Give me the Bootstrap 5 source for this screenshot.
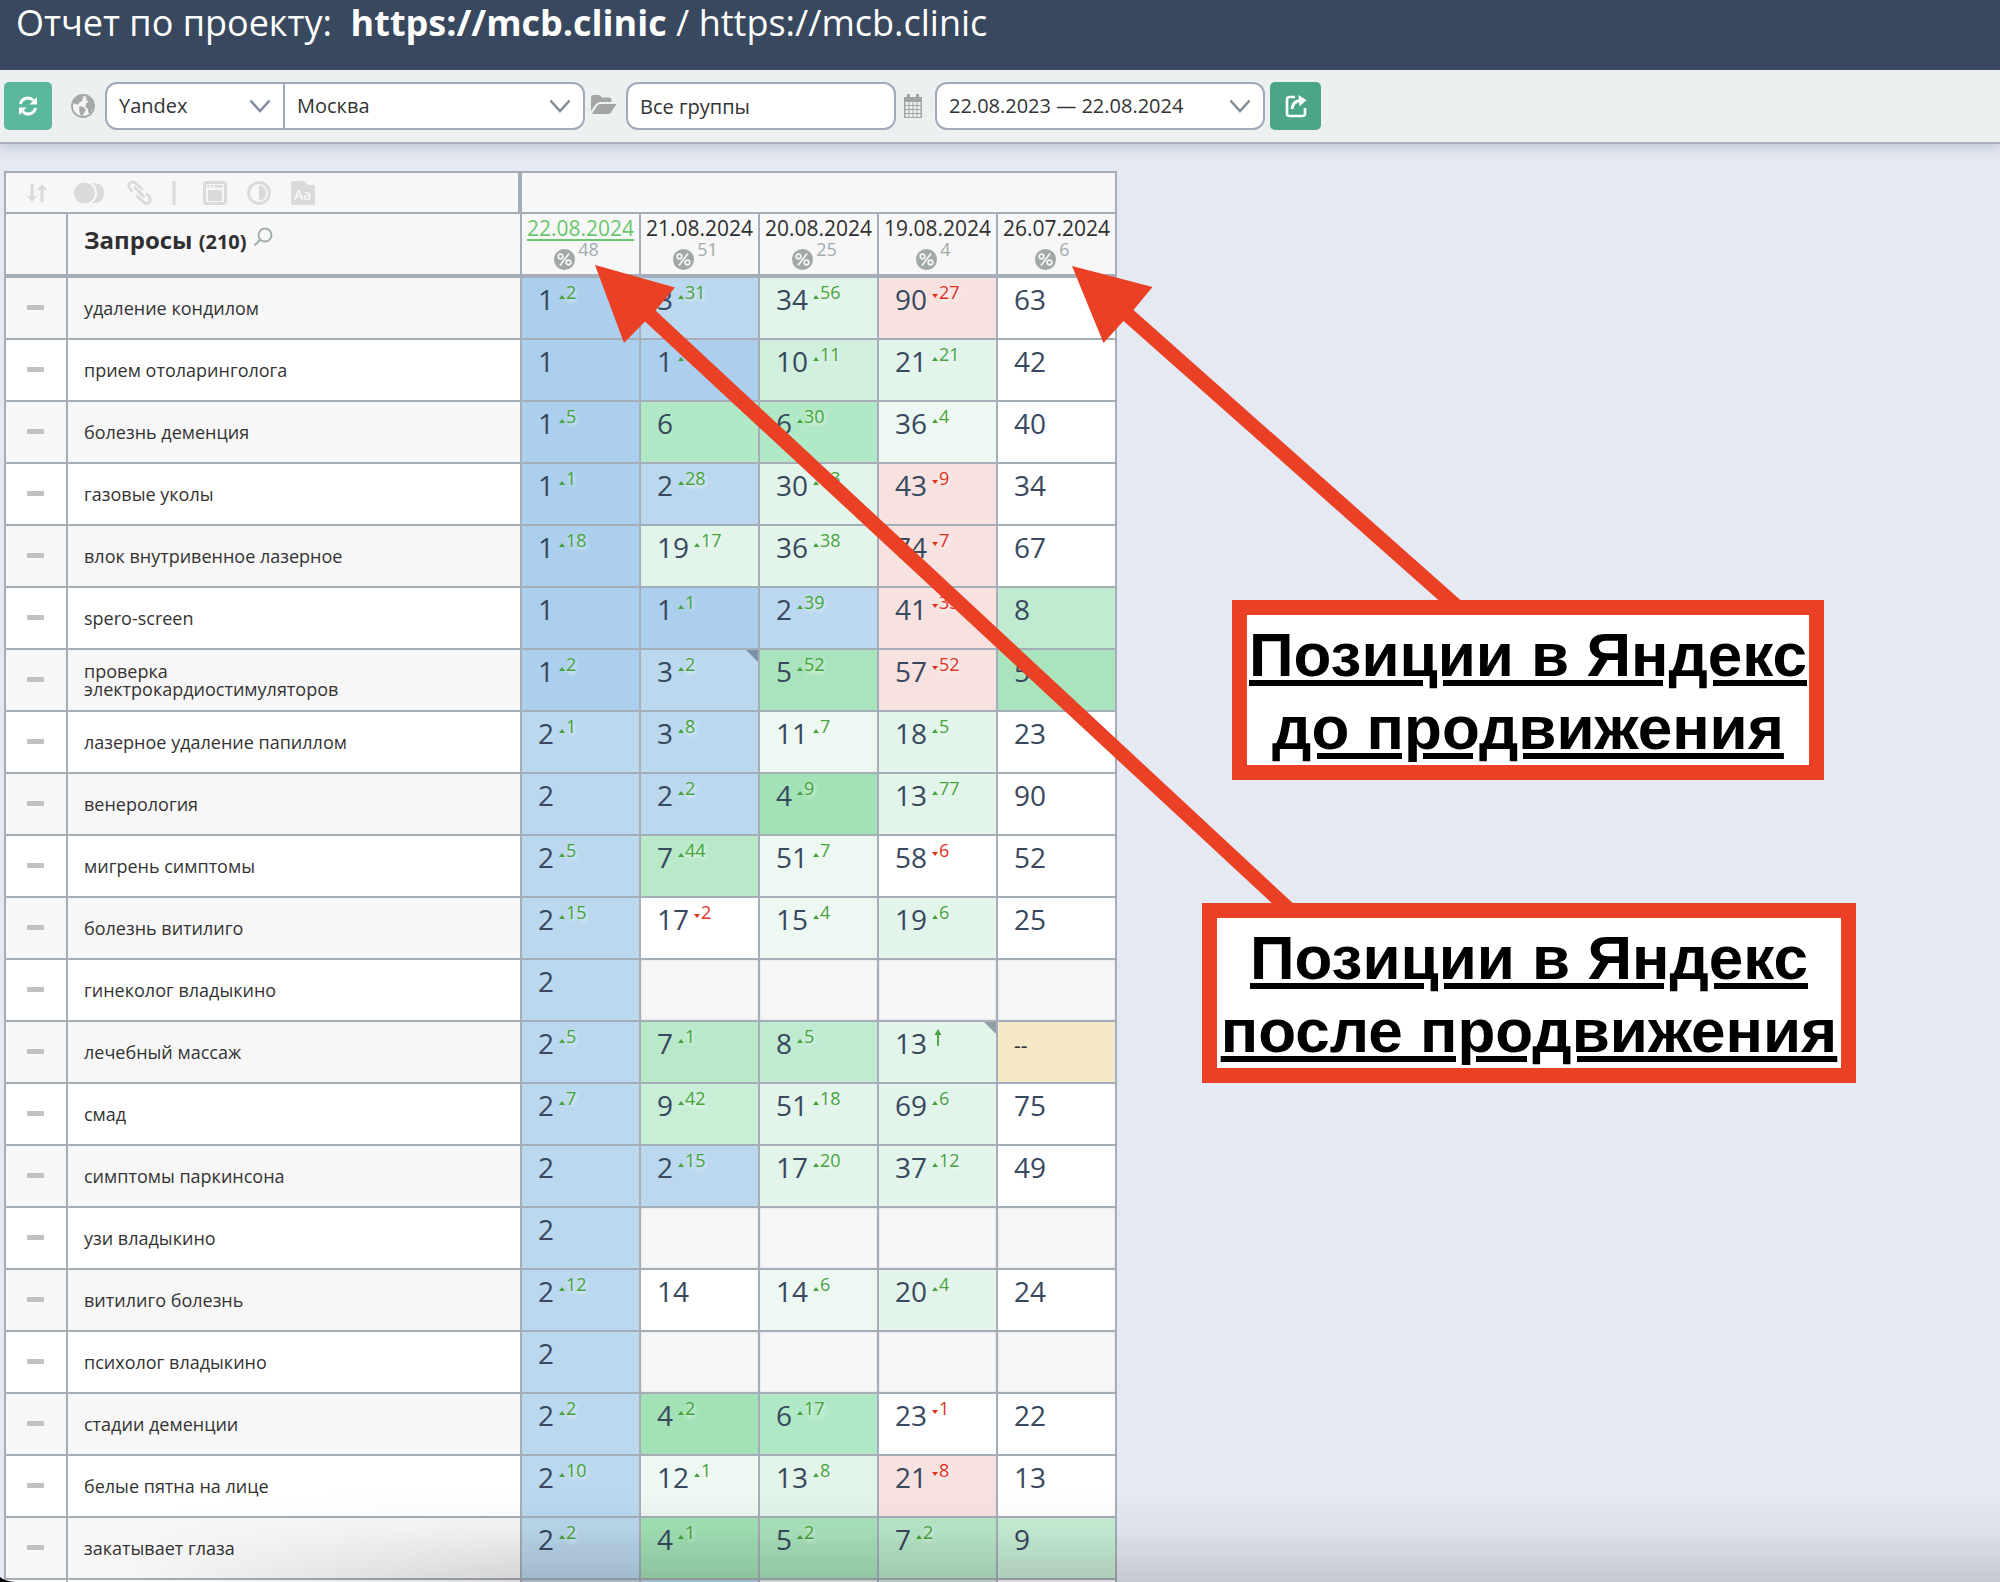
<!DOCTYPE html>
<html lang="ru">
<head>
<meta charset="utf-8">
<meta name="viewport" content="width=device-width, initial-scale=1">
<title>Отчет по проекту</title>
<link rel="stylesheet" href="https://cdn.jsdelivr.net/npm/bootstrap@5.3.0/dist/css/bootstrap.min.css">
<style>
body{font-family:"Open Sans","Noto Sans",sans-serif;background:#e5eaf2;color:#333}
.topline{background:#38485e;color:#fff;height:70px;font-size:36px;line-height:46px;padding-left:16px}
.toolbar{background:#ecf0f1;height:74px;border-bottom:2px solid #a9b1c0;box-shadow:0 3px 14px rgba(90,100,130,.3);padding-left:4px}
.toolbar .btn{height:48px;width:48px;border-radius:5px;background:#5bb79b;border:0}
.toolbar .btn.export{width:51px;margin-left:5px;background:#4ca585}
.toolbar .form-select,.toolbar .form-control{height:48px;font-size:20px;line-height:28px;color:#333;border:2px solid #a0a9b9;border-radius:12px;padding:8px 12px;background-color:#fff}
.toolbar .form-select{--bs-form-select-bg-img:url("data:image/svg+xml,%3Csvg xmlns='http://www.w3.org/2000/svg' viewBox='0 0 22 14'%3E%3Cpath d='M1.5 1.5 11 12 20.5 1.5' fill='none' stroke='%23838e9d' stroke-width='2.6'/%3E%3C/svg%3E");background-size:22px 14px;background-position:right 12px center;padding-right:36px}
.toolbar .engine{width:180px;border-radius:12px 0 0 12px}
.toolbar .region{width:302px;margin-left:-2px;border-radius:0 12px 12px 0}
.toolbar .groups{width:270px}
.toolbar .period{width:330px}
.grid-pos{width:1113px;table-layout:fixed;border-collapse:separate;border-spacing:0;border-top:2px solid #a5aeb8;border-left:2px solid #a5aeb8;margin:27px 0 0 4px}
.grid-pos th,.grid-pos td{border-right:2px solid #a5aeb8;border-bottom:2px solid #a5aeb8;padding:0;font-weight:400}
.grid-pos thead th,.grid-pos thead td{background:#f7f7f7}
.tools-row>*{height:41px}
.grid-pos .tools{border-right-width:4px}
.tools .btn{padding:0;border:0;line-height:1;color:#d9dadb}
.head-row>*{height:64px;vertical-align:top}
.grid-pos .head-row>*{border-bottom-width:4px}
.head-row h1{font-size:24px;line-height:28px;font-weight:700;margin:0;padding:12px 0 0 16px;color:#2f2f2f}
.head-row h1 span{font-size:20px}
.head-row h1 svg{vertical-align:2px}
.date{display:block;text-align:center;font-size:21px;line-height:24px;padding-top:2px;color:#2f2f2f;text-decoration:none}
.date.now{color:#6cc76c;text-decoration:underline;text-decoration-thickness:2px;text-underline-offset:3px}
.pct{padding-right:8px;font-size:18px;line-height:18px;color:#a3abac;gap:3px}
.pct svg{margin-top:9px}
tbody tr{height:62px}
tbody tr>*{background:#fff}
tbody tr:nth-child(odd)>*{background:#f7f7f7}
.grid-pos .tick{text-align:center;padding:0 2px 4px 0}
.tick i{display:inline-block;width:17px;height:5px;border-radius:1px;background:#c0c1c1;vertical-align:middle}
tbody th{font-size:18px;line-height:18px;vertical-align:middle;color:#333}
tbody th span{display:block;padding:0 150px 0 16px}
.grid-pos td.p{vertical-align:top;padding:5px 0 0 16px;font-size:28px;line-height:28px;color:#38485e;position:relative;white-space:nowrap}
td.p b{font-weight:400;display:inline-block;margin-top:2px}
td.p sup{top:0;font-size:18px;line-height:18px;vertical-align:top;color:#46a33c;margin-left:4px;text-shadow:1px 2px 4px rgba(255,255,255,.9);display:inline-block}
td.p sup::before{content:"";display:inline-block;border:3px solid transparent;border-top:0;border-bottom:4px solid #46a33c;margin:0 1px}
td.p sup.dn{color:#e0301e}
td.p sup.dn::before{border-bottom:0;border-top:4px solid #e0301e;margin-bottom:1px}
td.p sup.new::before{display:none}
tbody tr>td.k1{background:#abcfec}tbody tr>td.k2{background:#bbd8ee}
tbody tr>td.g4{background:#a2e2b6}tbody tr>td.g5{background:#aae4bc}tbody tr>td.g6{background:#b1e8c5}tbody tr>td.g7{background:#b9e9c9}tbody tr>td.g8{background:#c0ebd1}tbody tr>td.g9{background:#c8eed5}tbody tr>td.g10{background:#d0efdc}
tbody tr>td.up{background:#e1f5ea}tbody tr>td.lt{background:#eef8f3}tbody tr>td.rd{background:#f7e2e0}tbody tr>td.w{background:#fff}tbody tr>td.na{background:#f4e8c8}
tbody tr>td.e{background:#f7f7f7;box-shadow:inset 0 0 2px #ccc}
.grid-pos td.na{font-size:21px;line-height:36px;color:#333}
.flag::after{content:"";position:absolute;top:0;right:0;border-top:12px solid #7c90a8;border-left:12px solid transparent}
.flag.gray::after{border-top-color:#90a0a2}
.arrows{position:absolute;left:0;top:0;pointer-events:none}
.note{position:absolute;border:15px solid #ea4025;background:#fff;color:#000;font:700 62px/73px "Liberation Sans",Arial,sans-serif;text-align:center;text-decoration:underline;height:180px;padding-top:3px;white-space:nowrap}
.note.before{left:1232px;top:600px;width:592px}
.note.after{left:1202px;top:903px;width:654px}
.note span{display:block;margin:0 -20px}
.dock-shade{position:absolute;left:0;right:0;bottom:0;height:90px;pointer-events:none;background:linear-gradient(to bottom,transparent,rgba(0,0,0,.03) 40%,rgba(0,0,0,.14));-webkit-mask-image:linear-gradient(100deg,transparent 130px,#000 520px);mask-image:linear-gradient(100deg,transparent 130px,#000 520px)}
.edge{position:absolute;left:0;bottom:0}
</style>
<script src="https://cdn.jsdelivr.net/npm/bootstrap@5.3.0/dist/js/bootstrap.bundle.min.js"></script>
</head>
<body>
<div class="vh-100 overflow-hidden position-relative">
<header class="topline text-nowrap"><div class="topline-text">Отчет по проекту:&nbsp; <strong>https://mcb.clinic</strong> / https://mcb.clinic</div></header>
<form class="toolbar d-flex align-items-start pt-2">
<div class="d-flex align-items-center pt-1">
<button type="button" class="btn p-0 d-flex align-items-center justify-content-center" aria-label="Обновить"><svg width="20" height="20" viewBox="0 0 20 20" fill="none" stroke="#fff" stroke-width="3"><path d="M2.5 8A7.6 7.6 0 0 1 15.5 4.5M17.5 12A7.6 7.6 0 0 1 4.5 15.5"/><path d="M19 1v7.5h-7.500zM1 19v-7.500h7.500z" fill="#fff" stroke="none"/></svg></button>
<svg class="ms-3" width="37" height="26" viewBox="-3 0 37 26"><circle cx="12" cy="13" r="11" fill="#f4f5f5" stroke="#a5a7a8" stroke-width="1.8"/><path d="M2.500 8 7 3.500l4-1 2 2-2 1 .5 2-3 2-2 2.500-2-1.500-1.500 1zM8.500 13l3.500 1 3 2.500-2 3.500-2 3.500-2-3-1-4zM15 4l4 .5 3 4 .8 5-1.800 3-1.500 4-2-.5-.5-4-2.500-2 .5-3.500 2.500-1.500-2-2z" fill="#a5a7a8"/></svg>
<select class="form-select engine" aria-label="Поисковая система"><option>Yandex</option></select>
<select class="form-select region" aria-label="Регион"><option>Москва</option></select>
<svg width="41" height="26" viewBox="-6 0 41 26" fill="#a2a4a5"><path d="M0 18V5q0-3 3-3h5q2 0 2.500 2.500H18q2.500 0 2.500 3V9H9Q6 9 4.500 11.500z"/><path d="M1 21 6 13q1-2 3.500-2H25.500L20 19.500Q19 21 17 21z"/></svg>
<input class="form-control groups" type="text" value="Все группы" aria-label="Группы">
<svg width="39" height="26" viewBox="-8 0 39 26"><path fill="#a2a4a5" d="M0 4h3V1h3v3h6V1h3v3h3v21H0z"/><path d="M1.500 10.500h15M1.500 14.500h15M1.500 18.500h15M1.500 22.500h15" stroke="#ecf0f1" stroke-width="3" stroke-dasharray="3 1"/></svg>
<select class="form-select period" aria-label="Период"><option>22.08.2023 — 22.08.2024</option></select>
<button type="button" class="btn export p-0 d-flex align-items-center justify-content-center" aria-label="Экспорт"><svg width="24" height="24" viewBox="0 0 24 24" fill="none" stroke="#fff" stroke-width="2.600"><path d="M11 3H5.500Q3 3 3 5.500v14Q3 22 5.500 22h13q2.500 0 2.500-2.500V14"/><path d="M8 15Q8.500 7.500 16 6.500" stroke-width="3"/><path d="M14.500 1 22.500 6.200l-7 6z" fill="#fff" stroke="none"/></svg></button>
</div>
</form>
<table class="grid-pos">
<colgroup><col style="width:62px"><col style="width:454px"><col><col><col><col><col></colgroup>
<thead>
<tr class="tools-row"><td class="tools" colspan="2"><div class="d-flex align-items-center">
<button type="button" class="btn" style="margin-left:21px" aria-label="Сортировка"><svg width="20" height="18" viewBox="0 0 20 18" fill="#d9dadb"><path d="M3.500 0h3v12H10l-5 6-5-6h3.500zM13.500 18V6H10l5-6 5 6h-3.500v12z"/></svg></button>
<button type="button" class="btn" style="margin-left:27px" aria-label="Сравнение"><svg width="30" height="22" viewBox="0 0 30 22" fill="#d9dadb"><circle cx="10.500" cy="11" r="10.500"/><path d="M18 1q12-1 12 10T18 21q5-3 5-10T18 1z"/></svg></button>
<button type="button" class="btn" style="margin-left:23px" aria-label="Ссылки"><svg width="25" height="25" viewBox="0 0 25 25" fill="none" stroke="#d9dadb" stroke-width="2.800" stroke-linecap="round"><path d="M5 11 2.500 8Q.8 5 3 3t5-.5l7 6.500M8 7.500l8.500 9M10 16l7 6.500q3 2 5 0t.8-5L20 14"/></svg></button>
<svg class="ms-3" width="11" height="24"><path d="M6 0v24" stroke="#d9dadb" stroke-width="3"/></svg>
<button type="button" class="btn" style="margin-left:24px" aria-label="Снимок"><svg width="24" height="24" viewBox="0 0 24 24"><rect x="1.500" y="1.500" width="21" height="21" rx="2" fill="none" stroke="#d9dadb" stroke-width="3"/><path d="M4 4h2.500v2.500H4zM8 4h2v2.500H8zM11 4h9v2.500h-9zM5 9h14v11H5z" fill="#d9dadb"/></svg></button>
<button type="button" class="btn" style="margin-left:20px" aria-label="Контраст"><svg width="24" height="24" viewBox="0 0 24 24"><circle cx="12" cy="12" r="10.500" fill="none" stroke="#d9dadb" stroke-width="2.800"/><path d="M12 4.500a7.500 7.500 0 0 1 0 15z" fill="#d9dadb"/></svg></button>
<button type="button" class="btn" style="margin-left:20px" aria-label="Регистр"><svg width="24" height="24" viewBox="0 0 24 24"><path d="M0 2q0-2 2-2h11l4 4h5q2 0 2 2v16q0 2-2 2H2q-2 0-2-2z" fill="#d9dadb"/><text x="3" y="19" font-size="14" font-weight="600" fill="#f7f7f7">Aa</text></svg></button>
</div></td><td colspan="5"></td></tr>
<tr class="head-row"><td></td><th><h1>Запросы <span>(210)</span> <svg width="20" height="20" viewBox="0 0 20 20" fill="none" stroke="#a3aeac" stroke-width="2"><circle cx="12" cy="8" r="6.500"/><path d="M7.500 12.500 1.500 18.500"/></svg></h1></th>
<th><a href="#" class="date now">22.08.2024</a><div class="pct d-flex justify-content-center"><svg width="21" height="21" viewBox="0 0 21 21"><circle cx="10.500" cy="10.500" r="10.500" fill="#a1a9a8"/><g fill="none" stroke="#f7f7f7" stroke-width="1.700"><circle cx="6.500" cy="7.500" r="2.300"/><circle cx="14.500" cy="13.500" r="2.300"/><path d="M15 4.500 6 16.500"/></g></svg><span>48</span></div></th>
<th><a href="#" class="date">21.08.2024</a><div class="pct d-flex justify-content-center"><svg width="21" height="21" viewBox="0 0 21 21"><circle cx="10.500" cy="10.500" r="10.500" fill="#a1a9a8"/><g fill="none" stroke="#f7f7f7" stroke-width="1.700"><circle cx="6.500" cy="7.500" r="2.300"/><circle cx="14.500" cy="13.500" r="2.300"/><path d="M15 4.500 6 16.500"/></g></svg><span>51</span></div></th>
<th><a href="#" class="date">20.08.2024</a><div class="pct d-flex justify-content-center"><svg width="21" height="21" viewBox="0 0 21 21"><circle cx="10.500" cy="10.500" r="10.500" fill="#a1a9a8"/><g fill="none" stroke="#f7f7f7" stroke-width="1.700"><circle cx="6.500" cy="7.500" r="2.300"/><circle cx="14.500" cy="13.500" r="2.300"/><path d="M15 4.500 6 16.500"/></g></svg><span>25</span></div></th>
<th><a href="#" class="date">19.08.2024</a><div class="pct d-flex justify-content-center"><svg width="21" height="21" viewBox="0 0 21 21"><circle cx="10.500" cy="10.500" r="10.500" fill="#a1a9a8"/><g fill="none" stroke="#f7f7f7" stroke-width="1.700"><circle cx="6.500" cy="7.500" r="2.300"/><circle cx="14.500" cy="13.500" r="2.300"/><path d="M15 4.500 6 16.500"/></g></svg><span>4</span></div></th>
<th><a href="#" class="date">26.07.2024</a><div class="pct d-flex justify-content-center"><svg width="21" height="21" viewBox="0 0 21 21"><circle cx="10.500" cy="10.500" r="10.500" fill="#a1a9a8"/><g fill="none" stroke="#f7f7f7" stroke-width="1.700"><circle cx="6.500" cy="7.500" r="2.300"/><circle cx="14.500" cy="13.500" r="2.300"/><path d="M15 4.500 6 16.500"/></g></svg><span>6</span></div></th></tr>
</thead>
<tbody>
<tr><td class="tick"><i></i></td><th><span>удаление кондилом</span></th><td class="p k1"><b>1</b><sup>2</sup></td><td class="p k2"><b>3</b><sup>31</sup></td><td class="p up"><b>34</b><sup>56</sup></td><td class="p rd"><b>90</b><sup class="dn">27</sup></td><td class="p w"><b>63</b></td></tr>
<tr><td class="tick"><i></i></td><th><span>прием отоларинголога</span></th><td class="p k1"><b>1</b></td><td class="p k1"><b>1</b><sup>9</sup></td><td class="p g10"><b>10</b><sup>11</sup></td><td class="p up"><b>21</b><sup>21</sup></td><td class="p w"><b>42</b></td></tr>
<tr><td class="tick"><i></i></td><th><span>болезнь деменция</span></th><td class="p k1"><b>1</b><sup>5</sup></td><td class="p g6"><b>6</b></td><td class="p g6"><b>6</b><sup>30</sup></td><td class="p lt"><b>36</b><sup>4</sup></td><td class="p w"><b>40</b></td></tr>
<tr><td class="tick"><i></i></td><th><span>газовые уколы</span></th><td class="p k1"><b>1</b><sup>1</sup></td><td class="p k2"><b>2</b><sup>28</sup></td><td class="p up"><b>30</b><sup>13</sup></td><td class="p rd"><b>43</b><sup class="dn">9</sup></td><td class="p w"><b>34</b></td></tr>
<tr><td class="tick"><i></i></td><th><span>влок внутривенное лазерное</span></th><td class="p k1"><b>1</b><sup>18</sup></td><td class="p up"><b>19</b><sup>17</sup></td><td class="p up"><b>36</b><sup>38</sup></td><td class="p rd"><b>74</b><sup class="dn">7</sup></td><td class="p w"><b>67</b></td></tr>
<tr><td class="tick"><i></i></td><th><span>spero-screen</span></th><td class="p k1"><b>1</b></td><td class="p k1"><b>1</b><sup>1</sup></td><td class="p k2"><b>2</b><sup>39</sup></td><td class="p rd"><b>41</b><sup class="dn">33</sup></td><td class="p g8"><b>8</b></td></tr>
<tr><td class="tick"><i></i></td><th><span>проверка электрокардиостимуляторов</span></th><td class="p k1"><b>1</b><sup>2</sup></td><td class="p k2 flag"><b>3</b><sup>2</sup></td><td class="p g5"><b>5</b><sup>52</sup></td><td class="p rd"><b>57</b><sup class="dn">52</sup></td><td class="p g5"><b>5</b></td></tr>
<tr><td class="tick"><i></i></td><th><span>лазерное удаление папиллом</span></th><td class="p k2"><b>2</b><sup>1</sup></td><td class="p k2"><b>3</b><sup>8</sup></td><td class="p lt"><b>11</b><sup>7</sup></td><td class="p up"><b>18</b><sup>5</sup></td><td class="p w"><b>23</b></td></tr>
<tr><td class="tick"><i></i></td><th><span>венерология</span></th><td class="p k2"><b>2</b></td><td class="p k2"><b>2</b><sup>2</sup></td><td class="p g4"><b>4</b><sup>9</sup></td><td class="p up"><b>13</b><sup>77</sup></td><td class="p w"><b>90</b></td></tr>
<tr><td class="tick"><i></i></td><th><span>мигрень симптомы</span></th><td class="p k2"><b>2</b><sup>5</sup></td><td class="p g7"><b>7</b><sup>44</sup></td><td class="p lt"><b>51</b><sup>7</sup></td><td class="p w"><b>58</b><sup class="dn">6</sup></td><td class="p w"><b>52</b></td></tr>
<tr><td class="tick"><i></i></td><th><span>болезнь витилиго</span></th><td class="p k2"><b>2</b><sup>15</sup></td><td class="p w"><b>17</b><sup class="dn">2</sup></td><td class="p lt"><b>15</b><sup>4</sup></td><td class="p up"><b>19</b><sup>6</sup></td><td class="p w"><b>25</b></td></tr>
<tr><td class="tick"><i></i></td><th><span>гинеколог владыкино</span></th><td class="p k2"><b>2</b></td><td class="p e"></td><td class="p e"></td><td class="p e"></td><td class="p e"></td></tr>
<tr><td class="tick"><i></i></td><th><span>лечебный массаж</span></th><td class="p k2"><b>2</b><sup>5</sup></td><td class="p g7"><b>7</b><sup>1</sup></td><td class="p g8"><b>8</b><sup>5</sup></td><td class="p up flag gray"><b>13</b><sup class="new"><svg width="11" height="18" viewBox="-2 0 11 18" fill="none" stroke="#46a33c" stroke-width="1.800"><path d="M5 17V2"/><path d="M1.500 6 5 0l3.500 6z" fill="#46a33c" stroke="none"/></svg></sup></td><td class="p na">--</td></tr>
<tr><td class="tick"><i></i></td><th><span>смад</span></th><td class="p k2"><b>2</b><sup>7</sup></td><td class="p g9"><b>9</b><sup>42</sup></td><td class="p up"><b>51</b><sup>18</sup></td><td class="p up"><b>69</b><sup>6</sup></td><td class="p w"><b>75</b></td></tr>
<tr><td class="tick"><i></i></td><th><span>симптомы паркинсона</span></th><td class="p k2"><b>2</b></td><td class="p k2"><b>2</b><sup>15</sup></td><td class="p up"><b>17</b><sup>20</sup></td><td class="p up"><b>37</b><sup>12</sup></td><td class="p w"><b>49</b></td></tr>
<tr><td class="tick"><i></i></td><th><span>узи владыкино</span></th><td class="p k2"><b>2</b></td><td class="p e"></td><td class="p e"></td><td class="p e"></td><td class="p e"></td></tr>
<tr><td class="tick"><i></i></td><th><span>витилиго болезнь</span></th><td class="p k2"><b>2</b><sup>12</sup></td><td class="p w"><b>14</b></td><td class="p lt"><b>14</b><sup>6</sup></td><td class="p up"><b>20</b><sup>4</sup></td><td class="p w"><b>24</b></td></tr>
<tr><td class="tick"><i></i></td><th><span>психолог владыкино</span></th><td class="p k2"><b>2</b></td><td class="p e"></td><td class="p e"></td><td class="p e"></td><td class="p e"></td></tr>
<tr><td class="tick"><i></i></td><th><span>стадии деменции</span></th><td class="p k2"><b>2</b><sup>2</sup></td><td class="p g4"><b>4</b><sup>2</sup></td><td class="p g6"><b>6</b><sup>17</sup></td><td class="p w"><b>23</b><sup class="dn">1</sup></td><td class="p w"><b>22</b></td></tr>
<tr><td class="tick"><i></i></td><th><span>белые пятна на лице</span></th><td class="p k2"><b>2</b><sup>10</sup></td><td class="p lt"><b>12</b><sup>1</sup></td><td class="p up"><b>13</b><sup>8</sup></td><td class="p rd"><b>21</b><sup class="dn">8</sup></td><td class="p w"><b>13</b></td></tr>
<tr><td class="tick"><i></i></td><th><span>закатывает глаза</span></th><td class="p k2"><b>2</b><sup>2</sup></td><td class="p g4"><b>4</b><sup>1</sup></td><td class="p g5"><b>5</b><sup>2</sup></td><td class="p g7"><b>7</b><sup>2</sup></td><td class="p g9"><b>9</b></td></tr>
<tr><td></td><th></th><td class="p k2"></td><td class="p k2"></td><td class="p up"></td><td class="p g10"></td><td class="p w"></td></tr>
</tbody>
</table>
<div class="dock-shade"></div>
<svg class="edge" width="16" height="5" viewBox="0 0 16 5"><path d="M0 0Q5 4.500 16 5H0z" fill="#000"/></svg>
<svg class="arrows" width="1500" height="920" viewBox="0 0 1500 920" fill="#ea4025"><path d="M595 265 675 287.500 655.500 310.500 1297 907H1276L645 321.500 624 343z"/><path d="M1072 266 1152.500 287 1133.500 310 1466 605H1444L1123.500 321 1103.500 343z"/></svg>
<div class="note before"><span>Позиции в Яндекс</span><span>до продвижения</span></div>
<div class="note after"><span>Позиции в Яндекс</span><span>после продвижения</span></div>
</div>
</body>
</html>
